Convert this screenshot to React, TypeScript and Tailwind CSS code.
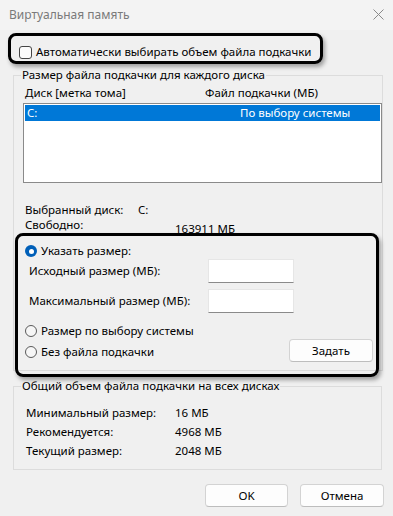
import React from "react";

const font = "font-['Segoe_UI','Noto_Sans',sans-serif]";

function Radio({ checked }: { checked?: boolean }) {
  return checked ? (
    <span className="w-[12px] h-[12px] rounded-full bg-[#005fb8] flex items-center justify-center shrink-0">
      <span className="w-[5px] h-[5px] rounded-full bg-white" />
    </span>
  ) : (
    <span className="w-[12px] h-[12px] rounded-full border border-[#5a5a5a] bg-[#f6f6f6] shrink-0" />
  );
}

function WinButton({ label, width }: { label: string; width: string }) {
  return (
    <button
      type="button"
      className={`${width} h-[23px] rounded-[4px] border border-[#d3d3d3] border-b-[#bdbdbd] bg-[#fdfdfd] text-[11.5px] leading-[16px] text-black`}
    >
      {label}
    </button>
  );
}

function Group({
  title,
  className,
  children,
}: {
  title: string;
  className?: string;
  children: React.ReactNode;
}) {
  return (
    <fieldset className={`border border-[#dcdcdc] ${className ?? ""}`}>
      <legend className="ml-[7px] px-[1px] leading-[16px]">{title}</legend>
      {children}
    </fieldset>
  );
}

export default function App() {
  return (
    <div
      className={`relative w-[393px] h-[516px] overflow-hidden bg-[#f0f0f0] text-[11.5px] leading-[16px] text-black ${font}`}
    >
      {/* title bar */}
      <div className="h-[30px] bg-[#f3f3f3] flex items-center justify-between pl-[9px] pr-[9px]">
        <span className="text-[#7a7a7a] text-[12px]">Виртуальная память</span>
        <svg width="11" height="11" viewBox="0 0 11 11" className="mt-[-2px]">
          <path d="M0.5 0.5 L10.5 10.5 M10.5 0.5 L0.5 10.5" stroke="#8a8a8a" strokeWidth="1" />
        </svg>
      </div>

      {/* auto checkbox */}
      <div className="mt-[14px] h-[16px] flex items-center pl-[19px]">
        <span className="w-[13px] h-[13px] rounded-[3px] border border-[#444] bg-[#fbfbfb] shrink-0" />
        <span className="ml-[4px]">Автоматически выбирать объем файла подкачки</span>
      </div>

      <div className="ml-[13px] w-[369px]">
        <Group title="Размер файла подкачки для каждого диска" className="mt-[7px] pb-[8px]">
          <div className="mt-[2px] h-[16px] flex pl-[11px]">
            <span className="w-[180px]">Диск [метка тома]</span>
            <span>Файл подкачки (МБ)</span>
          </div>
          <div className="mt-[2px] ml-[9px] w-[359px] h-[80px] border border-[#8a8a8a] bg-white p-[1px]">
            <div className="h-[16px] bg-[#0078d7] text-white flex pl-[2px]">
              <span className="w-[213px]">C:</span>
              <span>По выбору системы</span>
            </div>
          </div>

          <div className="mt-[19px] pl-[11px] leading-[15px]">
            <div className="h-[15px] flex">
              <span className="w-[113px]">Выбранный диск:</span>
              <span>C:</span>
            </div>
            <div className="h-[15px] flex">
              <span className="w-[150px]">Свободно:</span>
              <span className="mt-[4px]">163911 МБ</span>
            </div>
          </div>

          <div className="mt-[11px] h-[16px] flex items-center pl-[11px] gap-[4px]">
            <Radio checked />
            <span>Указать размер:</span>
          </div>
          <div className="h-[24px] flex items-center pl-[15px]">
            <span className="w-[179px]">Исходный размер (МБ):</span>
            <span className="w-[86px] h-[24px] bg-white border border-[#e6e6e6] border-b-[#8a8a8a]" />
          </div>
          <div className="mt-[6px] h-[24px] flex items-center pl-[15px]">
            <span className="w-[179px]">Максимальный размер (МБ):</span>
            <span className="w-[86px] h-[24px] bg-white border border-[#e6e6e6] border-b-[#8a8a8a]" />
          </div>
          <div className="mt-[10px] h-[16px] flex items-center pl-[11px] gap-[4px]">
            <Radio />
            <span>Размер по выбору системы</span>
          </div>
          <div className="h-[23px] flex items-center pl-[11px] pr-[9px]">
            <div className="flex items-center gap-[4px] flex-1 mt-[3px]">
              <Radio />
              <span>Без файла подкачки</span>
            </div>
            <WinButton label="Задать" width="w-[84px]" />
          </div>
        </Group>

        <Group title="Общий объем файла подкачки на всех дисках" className="mt-[7px] pt-[9px] pb-[9px]">
          {[
            ["Минимальный размер:", "16 МБ"],
            ["Рекомендуется:", "4968 МБ"],
            ["Текущий размер:", "2048 МБ"],
          ].map(([k, v]) => (
            <div key={k} className="h-[19px] flex items-center pl-[12px]">
              <span className="w-[149px]">{k}</span>
              <span>{v}</span>
            </div>
          ))}
        </Group>
      </div>

      <div className="mt-[14px] flex justify-end gap-[12px] pr-[9px]">
        <WinButton label="OK" width="w-[83px]" />
        <WinButton label="Отмена" width="w-[84px]" />
      </div>

      {/* annotation frames */}
      <div className="absolute left-[8px] top-[33px] w-[315px] h-[31px] rounded-[8px] border-[3px] border-black shadow-[2px_3px_4px_rgba(0,0,0,0.35)]" />
      <div className="absolute left-[15px] top-[233px] w-[364px] h-[144px] rounded-[8px] border-[3px] border-black shadow-[2px_3px_4px_rgba(0,0,0,0.35)]" />
    </div>
  );
}
